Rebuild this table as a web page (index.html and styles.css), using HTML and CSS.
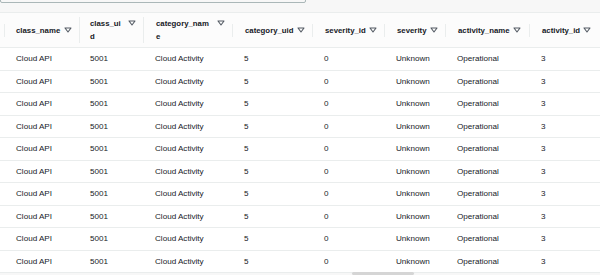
FILE: index.html
```html
<!DOCTYPE html>
<html lang="en">
<head>
  <meta charset="UTF-8">
  <title>Query results</title>
  <link rel="stylesheet" href="styles.css">
</head>
<body>

  <!-- search box, scrolled mostly out of view -->
  <div class="top-bar">
    <div class="search-box"></div>
  </div>

  <div class="table-wrap">
    <table class="results">
      <colgroup>
        <col style="width:79px">
        <col style="width:64px">
        <col style="width:89px">
        <col style="width:80px">
        <col style="width:72px">
        <col style="width:61px">
        <col style="width:84px">
        <col style="width:90px">
      </colgroup>
      <thead>
        <tr id="headRow"></tr>
      </thead>
      <tbody id="rows"></tbody>
    </table>
  </div>

  <div class="scrollbar"><div class="thumb"></div></div>

  <script>
    const columns = [
      { name: 'class_name', wrap: false },
      { name: 'class_uid', wrap: true },
      { name: 'category_name', wrap: true },
      { name: 'category_uid', wrap: false },
      { name: 'severity_id', wrap: false },
      { name: 'severity', wrap: false },
      { name: 'activity_name', wrap: false },
      { name: 'activity_id', wrap: false }
    ];
    const row = ['Cloud API', '5001', 'Cloud Activity', '5', '0', 'Unknown', 'Operational', '3'];

    const icon = '<svg class="filter" width="8" height="6" viewBox="0 0 8 6"><path d="M1 1 L7 1 L4 5 Z" fill="none" stroke="#545b64" stroke-width="1.1" stroke-linejoin="round"/></svg>';

    const headRow = document.getElementById('headRow');
    columns.forEach(c => {
      const th = document.createElement('th');
      th.innerHTML = `<div class="head"><span class="label ${c.wrap ? 'wrap' : ''}">${c.name}</span>${icon}</div>`;
      headRow.appendChild(th);
    });

    const body = document.getElementById('rows');
    for (let i = 0; i < 10; i++) {
      const tr = document.createElement('tr');
      row.forEach(v => {
        const td = document.createElement('td');
        td.textContent = v;
        tr.appendChild(td);
      });
      body.appendChild(tr);
    }
  </script>

</body>
</html>
```

FILE: styles.css
```css
html, body {
  margin: 0;
  padding: 0;
  overflow: hidden;
}

body {
  width: 600px;
  height: 275px;
  background: #f7f7f7;
  font-family: 'Liberation Sans', Arial, sans-serif;
  font-size: 8.1px;
  color: #16191f;
  position: relative;
}

.top-bar {
  display: flex;
  align-items: flex-start;
  height: 12px;
  overflow: hidden;
}

.search-box {
  width: 304px;
  height: 28px;
  margin-top: -27px;
  border: 1px solid #aab7b8;
  border-radius: 2px;
  background: #f7f7f7;
}

.table-wrap {
  width: 600px;
  overflow: hidden;
  border-top: 1px solid #eaeded;
}

.results {
  table-layout: fixed;
  border-collapse: collapse;
  width: 619px;
  background: #fff;
}

.results th {
  height: 34px;
  padding: 0;
  background: #fcfcfc;
  border-bottom: 1px solid #eaeded;
  font-size: 7.8px;
  font-weight: bold;
  text-align: left;
  vertical-align: middle;
}

.head {
  display: flex;
  align-items: flex-start;
  justify-content: space-between;
  gap: 3px;
  padding: 0 7px 0 12px;
  border-left: 1px solid #eaeded;
  line-height: 13px;
}

.results th:first-child .head {
  margin-left: 4px;
  padding-left: 11px;
}

.results th:nth-child(2) .head {
  padding-left: 10px;
}

.results th:nth-child(7) .head {
  padding-right: 9px;
}

.results th:last-child .head {
  padding-right: 28px;
}

.label {
  white-space: nowrap;
}

.label.wrap {
  white-space: normal;
  word-break: break-all;
}

.results th:nth-child(2) .label {
  width: 33px;
}

.results th:nth-child(3) .label {
  width: 54px;
}

.filter {
  flex: none;
  margin-top: 3px;
}

.results td {
  height: 21.5px;
  padding: 0 0 0 12px;
  border-bottom: 1px solid #eaeded;
  white-space: nowrap;
  vertical-align: middle;
}

.results td:first-child {
  padding-left: 16px;
}

.results td:nth-child(2) {
  padding-left: 11px;
}

.scrollbar {
  position: absolute;
  left: 0;
  right: 0;
  bottom: 0;
  height: 3px;
}

.scrollbar .thumb {
  margin-left: 352px;
  width: 62px;
  height: 3px;
  border-radius: 2px;
  background: #d5d5d5;
}
```
